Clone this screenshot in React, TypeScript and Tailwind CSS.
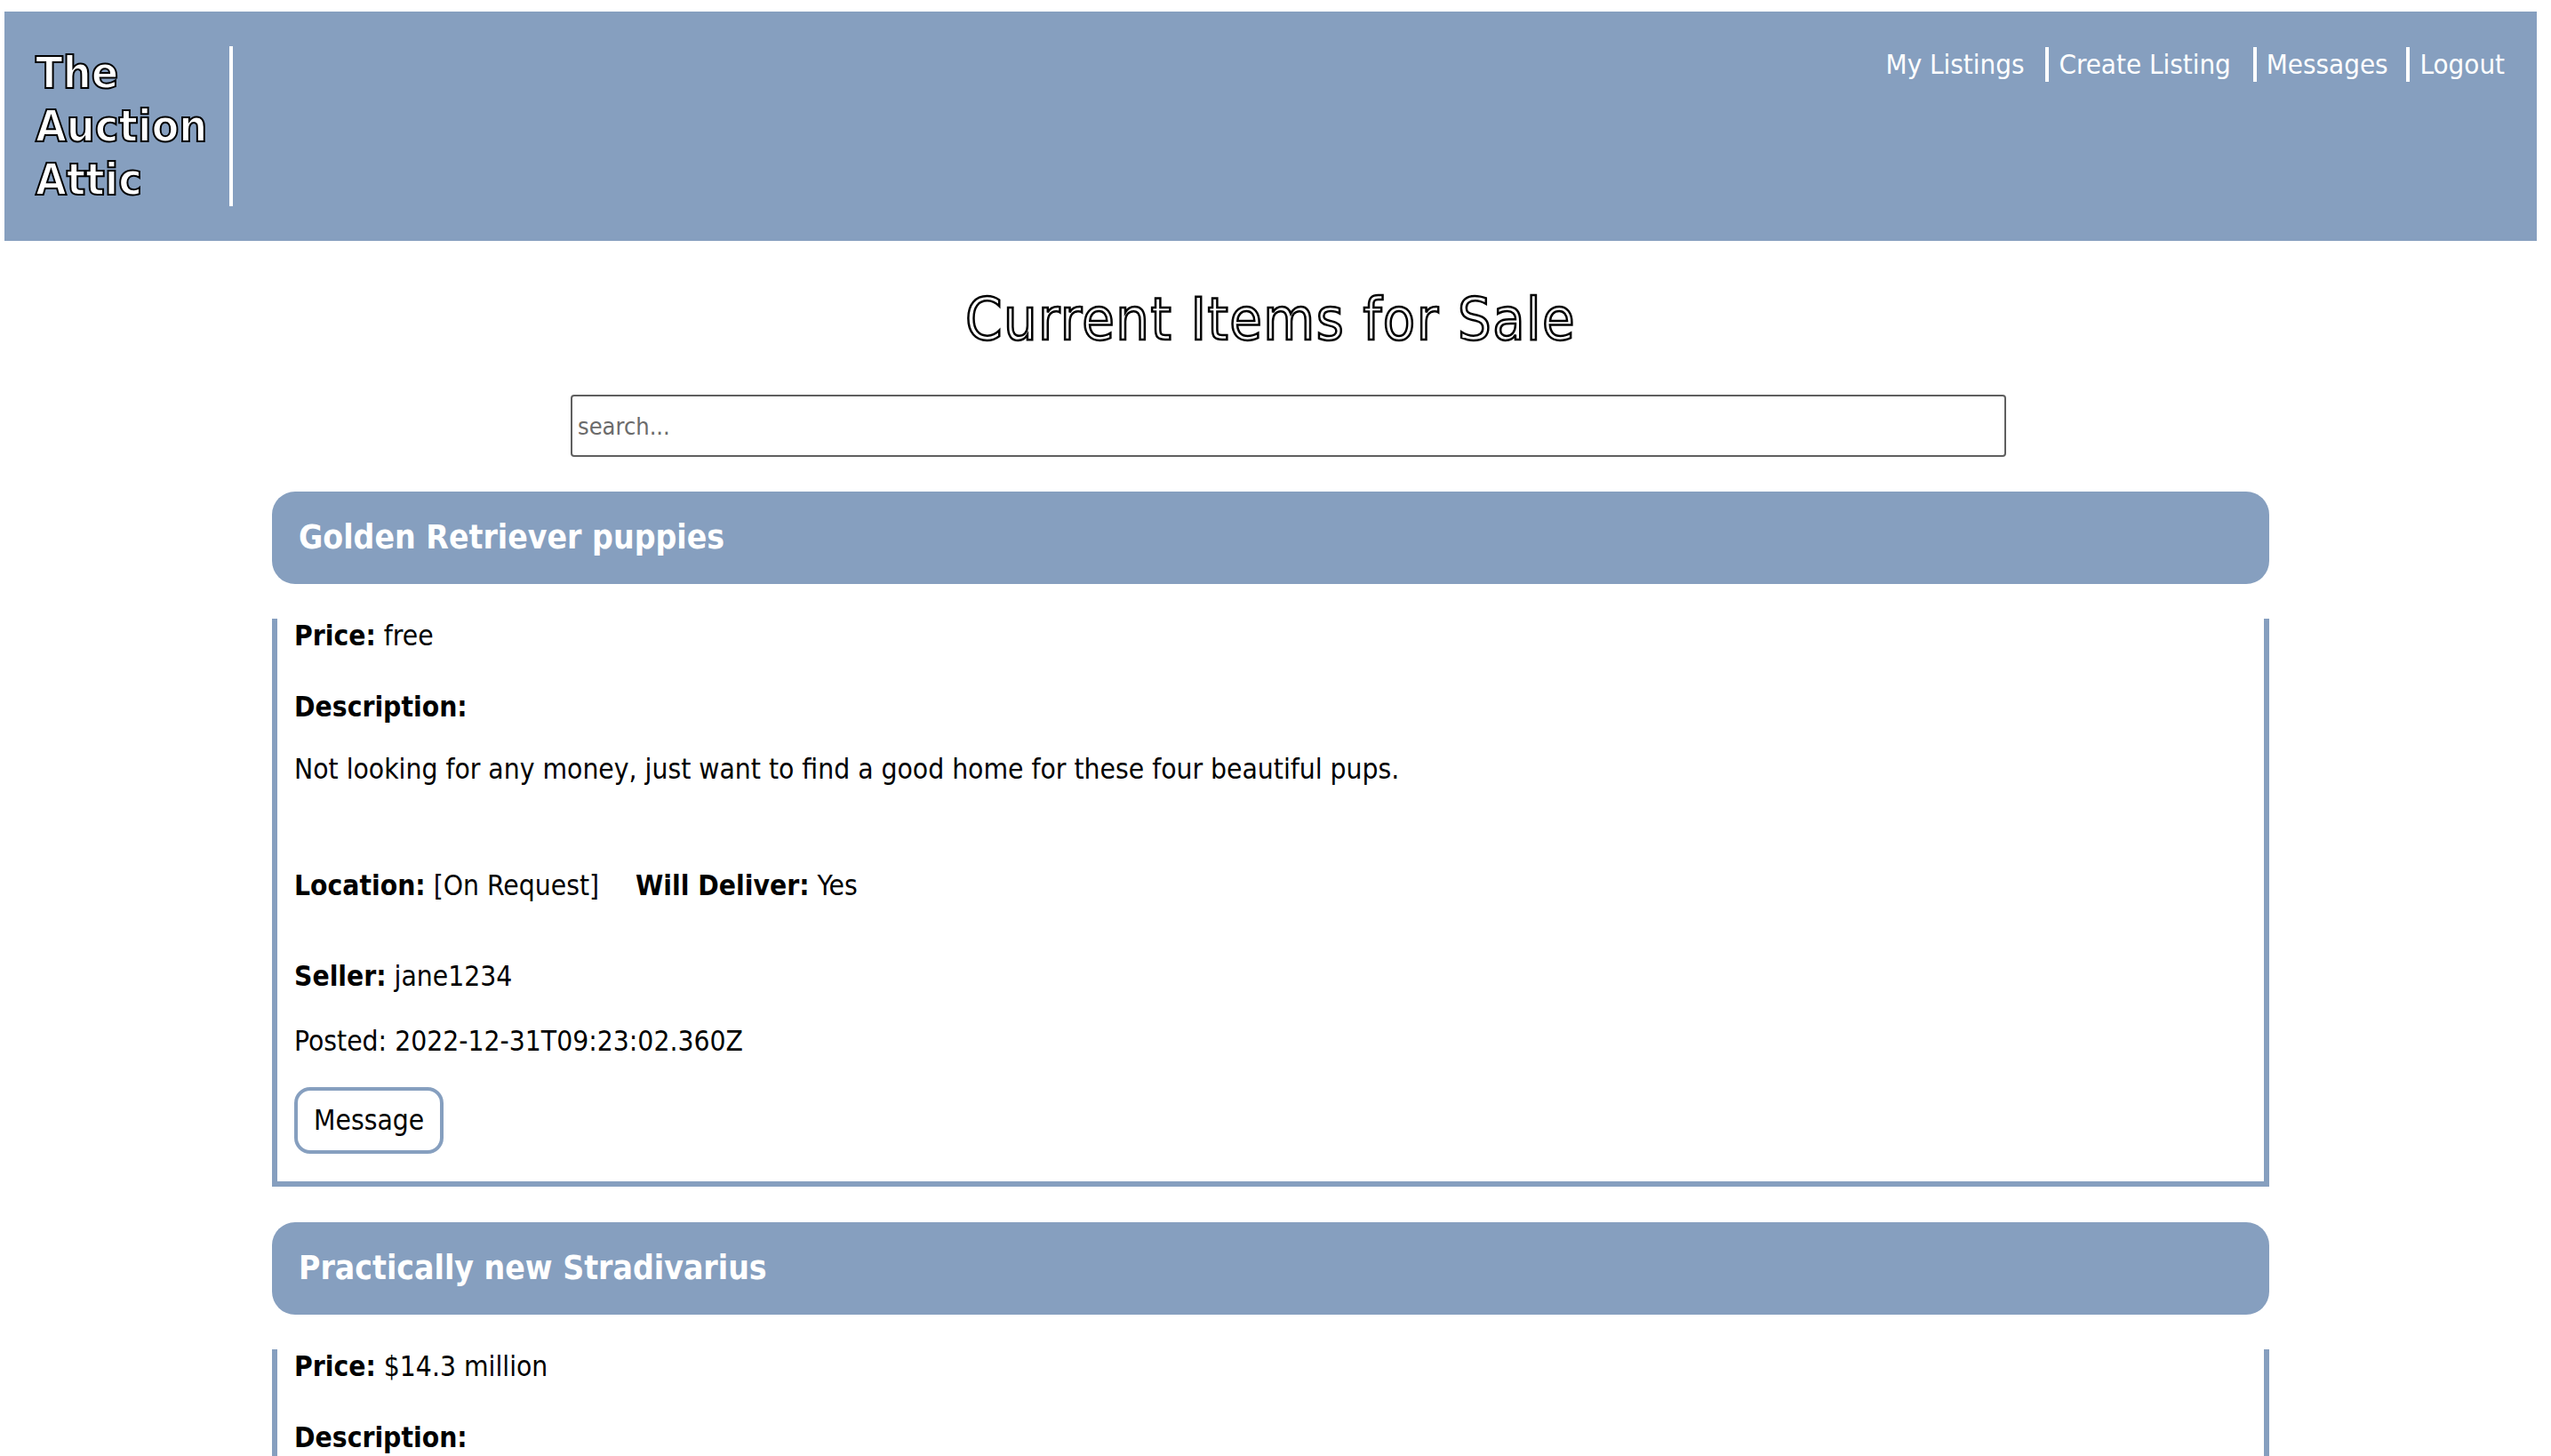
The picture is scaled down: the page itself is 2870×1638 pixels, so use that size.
import React from 'react';

type Listing = {
  title: string;
  price: string;
  description: string;
  location: string;
  willDeliver: string;
  seller: string;
  posted: string;
};

const listings: Listing[] = [
  {
    title: 'Golden Retriever puppies',
    price: 'free',
    description:
      'Not looking for any money, just want to find a good home for these four beautiful pups.',
    location: '[On Request]',
    willDeliver: 'Yes',
    seller: 'jane1234',
    posted: '2022-12-31T09:23:02.360Z',
  },
  {
    title: 'Practically new Stradivarius',
    price: '$14.3 million',
    description: 'Barely played, comes with the original case and bow.',
    location: '[On Request]',
    willDeliver: 'No',
    seller: 'violinfan',
    posted: '2022-12-30T17:41:12.118Z',
  },
];

const ListingCard = ({ item }: { item: Listing }) => {
  return (
    <div className="mb-[40px]">
      {/* title bar */}
      <div className="flex h-[104px] items-center rounded-[26px] bg-[#869fbf] pl-[30px]">
        <h3 className="text-[37px] font-bold text-white">{item.title}</h3>
      </div>

      {/* body */}
      <div className="mt-[39px] border-x-[6px] border-b-[6px] border-[#869fbf] pb-[31px] pl-[19px] text-[31.5px] leading-[39px] text-black">
        <p>
          <b>Price:</b> {item.price}
        </p>
        <p className="mt-[41px] font-bold">Description:</p>
        <p className="mt-[31px]">{item.description}</p>
        <p className="mt-[92px]">
          <b>Location:</b> {item.location}
          <span className="ml-[41px]">
            <b>Will Deliver:</b> {item.willDeliver}
          </span>
        </p>
        <p className="mt-[63px]">
          <b>Seller:</b> {item.seller}
        </p>
        <p className="mt-[34px]">Posted: {item.posted}</p>
        <button className="mt-[32px] h-[75px] rounded-[18px] border-4 border-[#869fbf] bg-white px-[18px] text-[31.5px] leading-[39px] text-black">
          Message
        </button>
      </div>
    </div>
  );
};

const App = () => {
  return (
    <div className="min-h-screen bg-white pl-[5px] pr-[16px] pt-[13px] font-['DejaVu_Sans_Condensed','DejaVu_Sans',sans-serif]">
      {/* Header */}
      <header className="flex h-[258px] items-center justify-between bg-[#869fbf]">
        <div className="ml-[35px] border-r-4 border-white pr-[25px] text-[50px] font-bold leading-[60px] text-white [-webkit-text-stroke:2px_black]">
          The
          <br />
          Auction
          <br />
          Attic
        </div>
        <nav className="mr-[36px] flex items-center self-start pt-[40px] text-[31px] leading-[39px] text-white">
          <a className="mr-[24px]">My Listings</a>
          <a className="mr-[25px] border-l-4 border-white pl-[11px]">Create Listing</a>
          <a className="mr-[20px] border-l-4 border-white pl-[11px]">Messages</a>
          <a className="border-l-4 border-white pl-[12px]">Logout</a>
        </nav>
      </header>

      <h1 className="mt-[50px] text-center text-[66px] leading-[78px] tracking-[1.5px] text-white [-webkit-text-stroke:2.5px_black]">
        Current Items for Sale
      </h1>

      <div className="mt-[45px] pl-[637px]">
        <input
          type="text"
          placeholder="search..."
          className="h-[70px] w-[1615px] rounded-[4px] border-2 border-[#5f5f5f] px-[6px] text-[27px] text-black placeholder:text-[#6b6b6b]"
        />
      </div>

      <div className="mx-[301px] mt-[39px]">
        {listings.map((item) => (
          <ListingCard key={item.title} item={item} />
        ))}
      </div>
    </div>
  );
};

export default App;
